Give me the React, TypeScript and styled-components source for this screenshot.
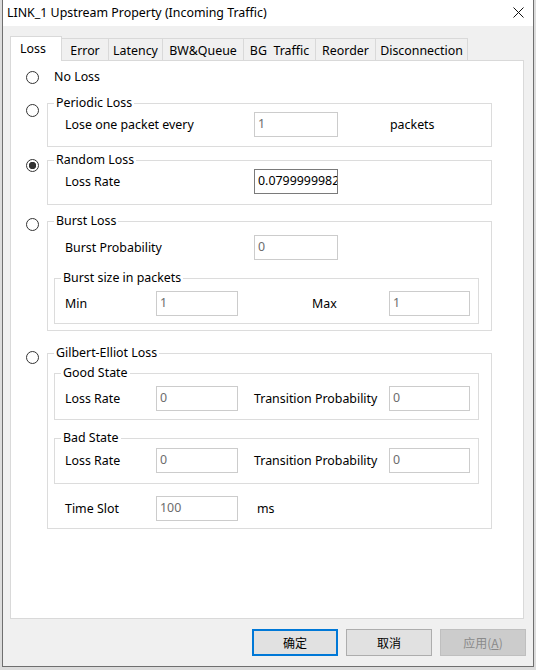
import React from "react";
import styled, { createGlobalStyle } from "styled-components";

const FS = "12.4px";

const Global = createGlobalStyle`
  html, body { margin: 0; padding: 0; background: #dcdcdc; }
  body { font-family: "Noto Sans", "Noto Sans CJK SC", sans-serif; font-size: ${FS}; color: #000; }
  * { box-sizing: border-box; }
`;

const Screen = styled.div`
  width: 536px;
  height: 670px;
  overflow: hidden;
  padding-left: 2px;
  background: #dcdcdc;
`;

const Window = styled.div`
  width: 532px;
  height: 667px;
  background: #f0f0f0;
  border: 1px solid #6f6f6f;
  border-top: none;
  display: flex;
  flex-direction: column;
`;

const TitleBar = styled.div`
  height: 26px;
  flex: none;
  background: #fff;
  display: flex;
  align-items: center;
  justify-content: space-between;
  padding: 0 9px 1px 4px;
  font-size: ${FS};
`;

const CloseIcon = () => (
  <svg width="11" height="11" viewBox="0 0 11 11">
    <path d="M0.5 0.5 L10.5 10.5 M10.5 0.5 L0.5 10.5" stroke="#111" strokeWidth="1" fill="none" />
  </svg>
);

const TabBar = styled.div`
  height: 34px;
  flex: none;
  display: flex;
  align-items: flex-end;
  padding-left: 7px;
`;

const Tab = styled.div<{ $w: number; $active?: boolean }>`
  width: ${(p) => p.$w}px;
  height: ${(p) => (p.$active ? 25 : 22)}px;
  margin-bottom: ${(p) => (p.$active ? -1 : 0)}px;
  margin-left: -1px;
  &:first-child { margin-left: 0; }
  position: relative;
  z-index: ${(p) => (p.$active ? 2 : 1)};
  background: ${(p) => (p.$active ? "#fff" : "#f0f0f0")};
  border: 1px solid #d9d9d9;
  border-bottom: none;
  display: flex;
  align-items: center;
  justify-content: center;
  padding-top: ${(p) => (p.$active ? 0 : 2)}px;
  padding-bottom: ${(p) => (p.$active ? 2 : 0)}px;
  padding-right: ${(p) => (p.$active ? 6 : 0)}px;
  font-size: ${FS};
  white-space: pre;
`;

const Panel = styled.div`
  margin-left: 7px;
  width: 514px;
  height: 559px;
  flex: none;
  background: #fff;
  border: 1px solid #d9d9d9;
  padding-left: 15px;
  display: flex;
  flex-direction: column;
`;

const Section = styled.div<{ $mt: number; $center?: boolean }>`
  display: flex;
  align-items: ${(p) => (p.$center ? "center" : "flex-start")};
  margin-top: ${(p) => p.$mt}px;
  height: ${(p) => (p.$center ? "16px" : "auto")};
`;

const RadioSlot = styled.div<{ $top?: number }>`
  width: 21px;
  flex: none;
  padding-top: ${(p) => p.$top ?? 0}px;
`;

const Radio = styled.span<{ $checked?: boolean }>`
  display: block;
  width: 13px;
  height: 13px;
  border-radius: 50%;
  border: 1px solid #333;
  background: ${(p) =>
    p.$checked ? "radial-gradient(circle, #333 0 3.4px, #fff 4px)" : "#fff"};
`;

const OptionText = styled.span`
  font-size: ${FS};
  line-height: 16px;
  margin-left: 7px;
`;

const Group = styled.fieldset<{ $w: number; $pt: number; $pb: number; $mt?: number }>`
  width: ${(p) => p.$w}px;
  margin: ${(p) => p.$mt ?? 0}px 0 0 0;
  min-width: 0;
  border: 1px solid #dcdcdc;
  padding: ${(p) => p.$pt}px 12px ${(p) => p.$pb}px 6px;
  display: flex;
  flex-direction: column;
`;

const Legend = styled.legend`
  padding: 0 2px;
  line-height: 16px;
  font-size: ${FS};
`;

const Row = styled.div<{ $indent: number; $mt?: number }>`
  display: flex;
  align-items: center;
  height: 25px;
  padding-left: ${(p) => p.$indent}px;
  margin-top: ${(p) => p.$mt ?? 0}px;
`;

const Label = styled.span<{ $w?: number; $ml?: number }>`
  flex: none;
  width: ${(p) => (p.$w ? `${p.$w}px` : "auto")};
  margin-left: ${(p) => p.$ml ?? 0}px;
  font-size: ${FS};
  white-space: nowrap;
`;

const Field = styled.input<{ $w: number }>`
  flex: none;
  width: ${(p) => p.$w}px;
  height: 25px;
  border: 1px solid ${(p) => (p.disabled ? "#cccccc" : "#7a7a7a")};
  background: #fff;
  color: ${(p) => (p.disabled ? "#6d6d6d" : "#000")};
  font-family: "Noto Sans", sans-serif;
  font-size: ${FS};
  padding: 0 0 3px 3px;
  margin: 0;
  outline: none;
  -webkit-text-fill-color: ${(p) => (p.disabled ? "#6d6d6d" : "#000")};
  opacity: 1;
`;

const ButtonRow = styled.div`
  margin-top: 10px;
  display: flex;
  justify-content: flex-end;
  gap: 8px;
  padding-right: 7px;
`;

const Button = styled.button<{ $variant?: "primary" | "disabled" }>`
  width: 86px;
  height: 27px;
  margin: 0;
  padding: 0;
  font-family: "Noto Sans CJK SC", "Noto Sans", sans-serif;
  font-size: 12px;
  background: ${(p) => (p.$variant === "disabled" ? "#cccccc" : "#e1e1e1")};
  color: ${(p) => (p.$variant === "disabled" ? "#8a8a8a" : "#000")};
  border: ${(p) =>
    p.$variant === "primary"
      ? "2px solid #0078d7"
      : p.$variant === "disabled"
      ? "1px solid #bfbfbf"
      : "1px solid #adadad"};
`;

const tabs: { label: string; w: number }[] = [
  { label: "Loss", w: 52 },
  { label: "Error", w: 48 },
  { label: "Latency", w: 55 },
  { label: "BW&Queue", w: 82 },
  { label: "BG\u00a0 Traffic", w: 73 },
  { label: "Reorder", w: 61 },
  { label: "Disconnection", w: 93 },
];

export default function App() {
  return (
    <>
      <Global />
      <Screen>
        <Window>
          <TitleBar>
            <span>LINK_1 Upstream Property (Incoming Traffic)</span>
            <CloseIcon />
          </TitleBar>
          <TabBar>
            {tabs.map((t, i) => (
              <Tab key={t.label} $w={t.w} $active={i === 0}>
                {t.label}
              </Tab>
            ))}
          </TabBar>
          <Panel>
            <Section $mt={8} $center>
              <RadioSlot>
                <Radio />
              </RadioSlot>
              <OptionText>No Loss</OptionText>
            </Section>

            <Section $mt={10}>
              <RadioSlot $top={9}>
                <Radio />
              </RadioSlot>
              <Group $w={445} $pt={1} $pb={9}>
                <Legend>Periodic Loss</Legend>
                <Row $indent={11}>
                  <Label $w={189}>Lose one packet every</Label>
                  <Field $w={84} disabled value="1" readOnly />
                  <Label $ml={52}>packets</Label>
                </Row>
              </Group>
            </Section>

            <Section $mt={5}>
              <RadioSlot $top={7}>
                <Radio $checked />
              </RadioSlot>
              <Group $w={445} $pt={1} $pb={10}>
                <Legend>Random Loss</Legend>
                <Row $indent={11}>
                  <Label $w={189}>Loss Rate</Label>
                  <Field $w={84} value="0.0799999982" readOnly />
                </Row>
              </Group>
            </Section>

            <Section $mt={8}>
              <RadioSlot $top={5}>
                <Radio />
              </RadioSlot>
              <Group $w={445} $pt={6} $pb={6}>
                <Legend>Burst Loss</Legend>
                <Row $indent={11}>
                  <Label $w={189}>Burst Probability</Label>
                  <Field $w={84} disabled value="0" readOnly />
                </Row>
                <Group $w={425} $pt={5} $pb={7} $mt={10}>
                  <Legend>Burst size in packets</Legend>
                  <Row $indent={4}>
                    <Label $w={91}>Min</Label>
                    <Field $w={82} disabled value="1" readOnly />
                    <Label $w={77} $ml={74}>Max</Label>
                    <Field $w={81} disabled value="1" readOnly />
                  </Row>
                </Group>
              </Group>
            </Section>

            <Section $mt={14}>
              <RadioSlot $top={6}>
                <Radio />
              </RadioSlot>
              <Group $w={445} $pt={0} $pb={7}>
                <Legend>Gilbert-Elliot Loss</Legend>
                <Group $w={425} $pt={5} $pb={8} $mt={4}>
                  <Legend>Good State</Legend>
                  <Row $indent={4}>
                    <Label $w={91}>Loss Rate</Label>
                    <Field $w={82} disabled value="0" readOnly />
                    <Label $w={135} $ml={16}>Transition Probability</Label>
                    <Field $w={81} disabled value="0" readOnly />
                  </Row>
                </Group>
                <Group $w={425} $pt={2} $pb={10} $mt={10}>
                  <Legend>Bad State</Legend>
                  <Row $indent={4}>
                    <Label $w={91}>Loss Rate</Label>
                    <Field $w={82} disabled value="0" readOnly />
                    <Label $w={135} $ml={16}>Transition Probability</Label>
                    <Field $w={81} disabled value="0" readOnly />
                  </Row>
                </Group>
                <Row $indent={11} $mt={12}>
                  <Label $w={91}>Time Slot</Label>
                  <Field $w={82} disabled value="100" readOnly />
                  <Label $ml={19}>ms</Label>
                </Row>
              </Group>
            </Section>
          </Panel>
          <ButtonRow>
            <Button $variant="primary">确定</Button>
            <Button>取消</Button>
            <Button $variant="disabled" disabled>
              应用(<u>A</u>)
            </Button>
          </ButtonRow>
        </Window>
      </Screen>
    </>
  );
}
